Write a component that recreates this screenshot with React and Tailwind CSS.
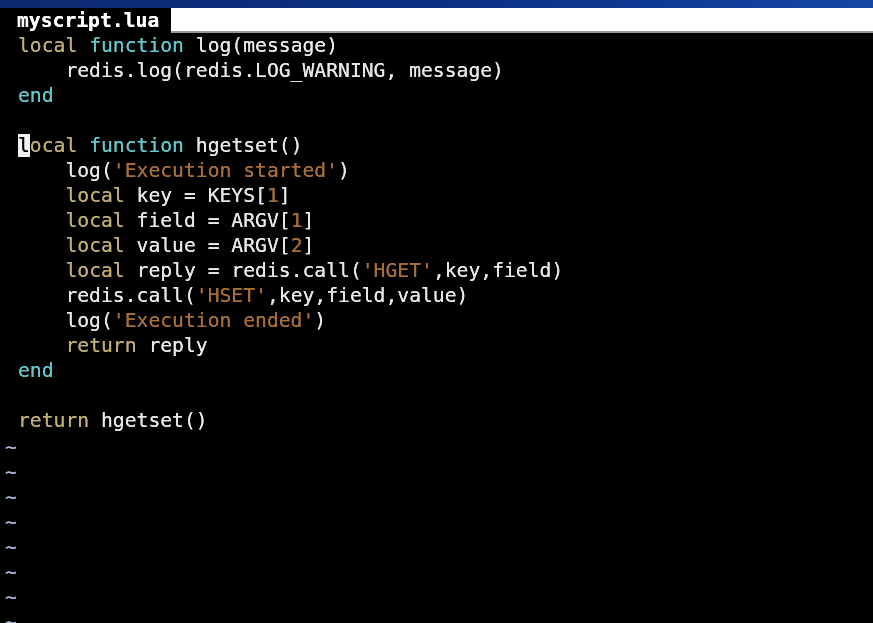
import React from 'react';

const K = ({ children }) => <span className="text-[#bfad74]">{children}</span>;
const F = ({ children }) => <span className="text-[#62c6ca]">{children}</span>;
const S = ({ children }) => <span className="text-[#a66f3a]">{children}</span>;

const lines = [
  <><K>local</K> <F>function</F> log(message)</>,
  <>    redis.log(redis.LOG_WARNING, message)</>,
  <><F>end</F></>,
  <></>,
  <><span className="bg-[#f2f2f2] text-black">l</span><K>ocal</K> <F>function</F> hgetset()</>,
  <>    log(<S>'Execution started'</S>)</>,
  <>    <K>local</K> key = KEYS[<S>1</S>]</>,
  <>    <K>local</K> field = ARGV[<S>1</S>]</>,
  <>    <K>local</K> value = ARGV[<S>2</S>]</>,
  <>    <K>local</K> reply = redis.call(<S>'HGET'</S>,key,field)</>,
  <>    redis.call(<S>'HSET'</S>,key,field,value)</>,
  <>    log(<S>'Execution ended'</S>)</>,
  <>    <K>return</K> reply</>,
  <><F>end</F></>,
  <></>,
  <><K>return</K> hgetset()</>,
];

export default function App() {
  return (
    <div className="w-[873px] h-[623px] overflow-hidden bg-black font-['DejaVu_Sans_Mono',monospace] text-[19.7px] text-[#e8e8e8] blur-[0.4px] [text-shadow:0_0_0.6px_currentColor]">
      {/* window title strip */}
      <div className="h-[8px] bg-gradient-to-r from-[#0c2a70] via-[#0a2f82] to-[#1546a6]" />

      {/* tab line */}
      <div className="flex h-[25px]">
        <div className="w-[171px] bg-black pl-[17px] font-bold text-white leading-[25px] whitespace-pre">myscript.lua</div>
        <div className="flex-1 bg-white border-b-2 border-[#9a9a9a]" />
      </div>

      {/* buffer */}
      <div className="pl-[18px]">
        {lines.map((l, i) => (
          <div key={i} className="h-[25px] leading-[25px] whitespace-pre">{l}</div>
        ))}
      </div>
      <div className="pl-[5px] pt-[2px] text-[#a8b4d8]">
        {Array.from({ length: 8 }).map((_, i) => (
          <div key={i} className="h-[25px] leading-[25px]">~</div>
        ))}
      </div>
    </div>
  );
}
